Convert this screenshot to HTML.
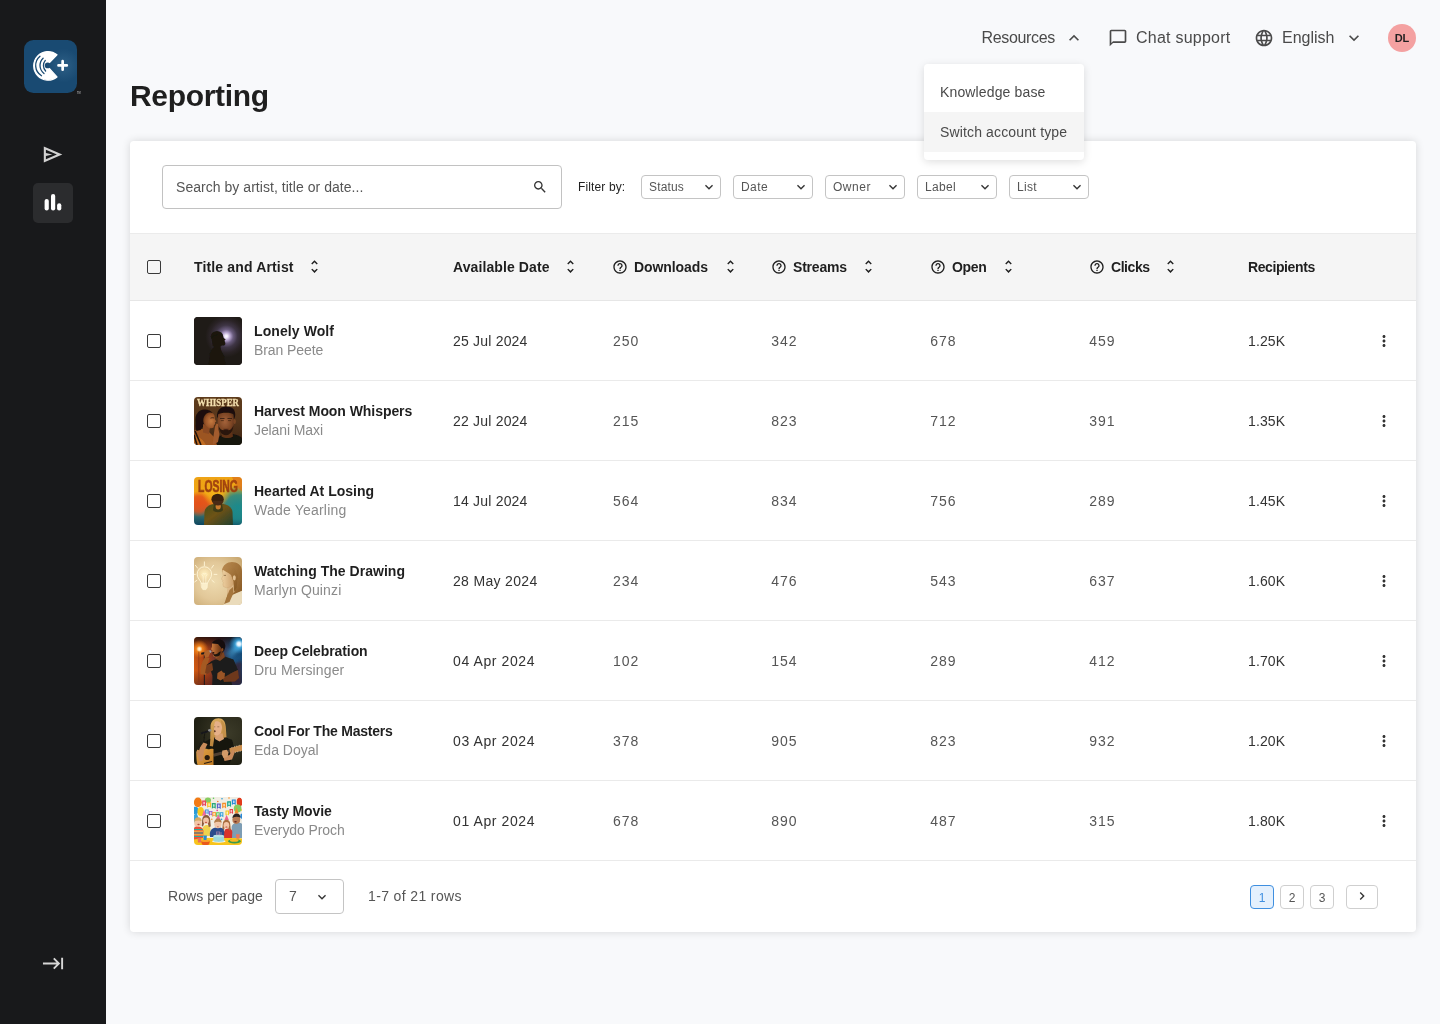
<!DOCTYPE html>
<html lang="en">
<head>
<meta charset="utf-8">
<title>Reporting</title>
<style>
*{box-sizing:border-box}
html,body{margin:0;padding:0}
html{background:#f8f9fb}
body{width:1440px;height:1024px;overflow:hidden;font-family:"Liberation Sans",sans-serif;color:#1f1f1f;position:relative;-webkit-font-smoothing:antialiased}
#app{position:absolute;left:0;top:0;width:1440px;height:1024px;will-change:transform}
svg{display:block}
.abs{position:absolute}
.t{position:absolute;white-space:nowrap}
/* sidebar */
.sidebar{position:absolute;left:0;top:0;width:106px;height:1024px;background:#18191b}
.logo{position:absolute;left:24px;top:40px;width:58px;height:56px}
.nav-item{position:absolute;left:33px;width:40px;height:40px;border-radius:5px}
.nav-item.active{background:#2b2c2e}
/* topbar */
.topbar{position:absolute;left:106px;top:0;width:1334px;height:76px}
.topbar .t{font-size:16px;line-height:20px;color:#4a4a4a;top:27.5px}
.topbar svg{position:absolute;top:28px;width:20px;height:20px;fill:#4a4a4a}
.avatar{position:absolute;left:1282px;top:24px;width:28px;height:28px;border-radius:50%;background:#f4a1a1;color:#1f1f1f;font-weight:700;font-size:11px;line-height:28px;text-align:center}
.menu{position:absolute;left:924px;top:64px;width:160px;height:96px;background:#fff;border-radius:4px;box-shadow:0 2px 8px rgba(0,0,0,.13);padding:8px 0;z-index:5}
.menu-item{position:relative;height:40px;font-size:14px;line-height:40px;color:#4a4a4a;padding-left:16px;white-space:nowrap}
.menu-item.hover{background:#f5f5f5}
h1{position:absolute;left:130px;top:76px;margin:0;font-size:30px;line-height:40px;font-weight:700;color:#1f1f1f;white-space:nowrap}
/* card */
.card{position:absolute;left:130px;top:141px;width:1286px;height:791px;background:#fff;border-radius:4px;box-shadow:0 0 8px rgba(0,0,0,.14)}
.toolbar{position:relative;height:92px}
.search{position:absolute;left:32px;top:24px;width:400px;height:44px;border:1px solid #c2c2c2;border-radius:4px;background:#fff}
.search .t{left:13px;top:11px;font-size:14px;line-height:20px;color:#555}
.search svg{position:absolute;left:369px;top:13px;width:16px;height:16px;fill:#333}
.filter-label{left:448px;top:38px;font-size:12px;line-height:16px;color:#1f1f1f}
.select{position:absolute;top:34px;width:80px;height:24px;border:1px solid #c4c4c4;border-radius:4px;background:#fff}
.select .t{left:7px;top:3px;font-size:12px;line-height:16px;color:#555}
.select svg{position:absolute;left:59px;top:3px;width:16px;height:16px;fill:#333}
table{border-collapse:separate;border-spacing:0;table-layout:fixed;width:1286px}
th,td{padding:0;text-align:left;vertical-align:middle;position:relative}
thead th{height:68px;background:#f5f5f5;border-top:1px solid #ebebeb;border-bottom:1px solid #e6e6e6;font-size:14px;font-weight:700;color:#1f1f1f}
tbody td{height:80px;border-bottom:1px solid #eaeaea;font-size:14px;color:#555}
.cb{display:block;width:14px;height:14px;margin-left:17px;border:1px solid #3a3a3a;border-radius:2px;background:transparent}
.th-in{position:relative;height:20px}
.th-in .t{top:-.5px;line-height:20px}
.th-in svg{position:absolute;fill:#1f1f1f}
.th-in svg.help{left:-1px;top:2px;width:16px;height:16px}
.th-in svg.sort{top:1px;width:17px;height:17px}
.song{position:relative;height:48px}
.thumb{position:absolute;left:0;top:0;width:48px;height:48px;border-radius:4px;overflow:hidden}
.song .title{left:60px;top:4px;font-weight:700;color:#1f1f1f;line-height:20px}
.song .artist{left:60px;top:23px;color:#8a8a8a;line-height:20px}
.cell{position:relative;height:20px}
.cell .t{top:0;left:0;line-height:20px}
.dark{color:#333}
.kebab{position:absolute;left:15px;top:-9px;width:18px;height:18px;fill:#333}
/* footer */
.footer{position:relative;height:71px}
.footer .t{font-size:14px;line-height:20px;color:#555;top:25px}
.rpp{position:absolute;left:145px;top:18px;width:69px;height:35px;border:1px solid #c4c4c4;border-radius:4px}
.rpp .t{left:13px;top:6px}
.rpp svg{position:absolute;left:38px;top:9px;width:16px;height:16px;fill:#333}
.pg{position:absolute;top:23.5px;width:24px;height:24px;border:1px solid #cfcfcf;border-radius:4px;font-size:12px;line-height:22px;padding-top:1px;text-align:center;color:#555;background:#fff}
.pg.on{border-color:#3f8fe0;background:#e4f0fd;color:#3f8fe0}
.pg svg{width:16px;height:16px;fill:#333;margin:1.5px auto 0}
</style>
</head>
<body>
<div id="app">
<aside class="sidebar">
  <svg class="logo" viewBox="0 0 58 56" aria-label="logo">
    <defs>
      <radialGradient id="lg" cx="39.5" cy="25.5" r="17" gradientUnits="userSpaceOnUse">
        <stop offset="0" stop-color="#2d5f86"/><stop offset="1" stop-color="#194a72"/>
      </radialGradient>
    </defs>
    <rect x="0" y="0" width="53" height="53" rx="9.5" fill="url(#lg)"/>
    <path d="M33 14.750A14.300 14.300 0 1 0 33 36.950L22.600 25.500Z" fill="#fff" stroke="#fff" stroke-width="1.200" stroke-linejoin="round"/>
    <circle cx="23.700" cy="25.450" r="2.900" fill="url(#lg)"/>
    <g fill="none" stroke="#194a72" stroke-width="1.300" stroke-linecap="round">
      <path d="M16 16.300A11.900 11.900 0 0 0 17.500 35.700"/>
      <path d="M19.100 18.200A10.100 10.100 0 0 0 20 33.500"/>
      <path d="M21.300 20.400A8 8 0 0 0 21.600 31"/>
    </g>
    <path d="M34.500 25.400H42.800M38.650 21.200V29.700" stroke="#fff" stroke-width="2.700" stroke-linecap="round" fill="none"/>
    <text x="53" y="54" font-size="2.600" font-family="Liberation Sans, sans-serif" font-weight="700" fill="#9a9a9c">TM</text>
  </svg>
  <nav>
    <a class="nav-item" style="top:134px">
      <svg class="abs" style="left:7px;top:8px" width="26" height="24" viewBox="40 142 26 24" fill="#d2d2d2"><path fill-rule="evenodd" d="M43.800 146.500L62.300 154.450L43.800 162.400ZM45.900 149.700L45.900 153.100L52.300 154.450L45.900 155.900L45.900 159.200L56.900 154.450Z"/></svg>
    </a>
    <a class="nav-item active" style="top:182.5px">
      <svg class="abs" style="left:0;top:-.5px" width="40" height="40" viewBox="0 0 40 40" fill="#fff"><rect x="11.6" y="17" width="4.2" height="11.6" rx="2.1"/><rect x="18" y="12" width="4.2" height="16.6" rx="2.1"/><rect x="24.1" y="21.2" width="4.2" height="7.4" rx="2.1"/></svg>
    </a>
  </nav>
  <a class="abs" style="left:41.5px;top:952px">
    <svg width="23" height="23" viewBox="0 0 24 24" fill="#d6d6d6"><path d="M11.59 7.41L15.17 11H1v2h14.17l-3.59 3.59L13 18l6-6-6-6-1.41 1.41zM20 6v12h2V6h-2z"/></svg>
  </a>
</aside>

<header class="topbar">
  <span class="t" style="letter-spacing:-0.34px;left:875.5px">Resources</span>
  <svg style="left:958px" viewBox="0 0 24 24"><path d="M12 8l-6 6 1.41 1.41L12 10.83l4.59 4.58L18 14z"/></svg>
  <svg style="left:1002px" viewBox="0 0 24 24"><path d="M20 2H4c-1.1 0-2 .9-2 2v18l4-4h14c1.1 0 2-.9 2-2V4c0-1.1-.9-2-2-2zm0 14H6l-2 2V4h16v12z"/></svg>
  <span class="t" style="letter-spacing:0.24px;left:1030px">Chat support</span>
  <svg style="left:1148px" viewBox="0 0 24 24"><path d="M11.99 2C6.47 2 2 6.48 2 12s4.47 10 9.99 10C17.52 22 22 17.52 22 12S17.52 2 11.99 2zm6.93 6h-2.95c-.32-1.25-.78-2.45-1.38-3.56 1.84.63 3.37 1.91 4.33 3.56zM12 4.04c.83 1.2 1.48 2.53 1.91 3.96h-3.82c.43-1.43 1.08-2.76 1.91-3.960zM4.26 14C4.1 13.36 4 12.69 4 12s.1-1.36.26-2h3.380c-.08.66-.14 1.32-.14 2 0 .68.06 1.34.14 2H4.260zm.82 2h2.95c.32 1.25.78 2.45 1.38 3.56-1.84-.63-3.37-1.9-4.33-3.560zm2.950-8H5.080c.96-1.66 2.49-2.93 4.33-3.56C8.810 5.550 8.350 6.750 8.030 8zM12 19.960c-.83-1.2-1.48-2.53-1.91-3.96h3.820c-.43 1.430-1.080 2.760-1.910 3.960zM14.340 14H9.660c-.09-.66-.16-1.32-.16-2 0-.68.07-1.350.16-2h4.680c.09.65.16 1.320.16 2 0 .68-.07 1.340-.16 2zm.25 5.560c.6-1.110 1.060-2.310 1.380-3.560h2.950c-.96 1.650-2.490 2.930-4.330 3.560zM16.360 14c.08-.66.14-1.320.14-2 0-.68-.06-1.340-.14-2h3.380c.16.64.26 1.310.26 2s-.1 1.360-.26 2h-3.380z"/></svg>
  <span class="t" style="letter-spacing:-0.01px;left:1176px">English</span>
  <svg style="left:1238px" viewBox="0 0 24 24"><path d="M16.59 8.59L12 13.17 7.41 8.59 6 10l6 6 6-6z"/></svg>
  <div class="avatar">DL</div>
</header>
<div class="menu" role="menu">
  <div class="menu-item"><span style="letter-spacing:0.14px">Knowledge base</span></div>
  <div class="menu-item hover"><span style="letter-spacing:0.14px">Switch account type</span></div>
</div>

<h1><span style="letter-spacing:-0.33px">Reporting</span></h1>
<main class="card">
 <div class="toolbar">
  <div class="search"><span class="t" style="letter-spacing:0.04px">Search by artist, title or date...</span><svg viewBox="0 0 24 24"><path d="M15.5 14h-.79l-.28-.27C15.410 12.590 16 11.110 16 9.500 16 5.910 13.090 3 9.500 3S3 5.910 3 9.500 5.910 16 9.500 16c1.610 0 3.090-.59 4.230-1.570l.27.28v.79l5 4.990L20.490 19l-4.990-5zm-6 0C7.010 14 5 11.990 5 9.500S7.010 5 9.500 5 14 7.010 14 9.500 11.990 14 9.500 14z"/></svg></div>
  <span class="t filter-label" style="letter-spacing:0.13px">Filter by:</span>
  <div class="select" style="left:511px"><span class="t" style="letter-spacing:0.15px">Status</span><svg viewBox="0 0 24 24"><path d="M16.59 8.59L12 13.17 7.41 8.590 6 10l6 6 6-6z"/></svg></div>
  <div class="select" style="left:603px"><span class="t" style="letter-spacing:0.45px">Date</span><svg viewBox="0 0 24 24"><path d="M16.59 8.59L12 13.17 7.41 8.590 6 10l6 6 6-6z"/></svg></div>
  <div class="select" style="left:695px"><span class="t" style="letter-spacing:0.54px">Owner</span><svg viewBox="0 0 24 24"><path d="M16.59 8.59L12 13.17 7.41 8.590 6 10l6 6 6-6z"/></svg></div>
  <div class="select" style="left:787px"><span class="t" style="letter-spacing:0.33px">Label</span><svg viewBox="0 0 24 24"><path d="M16.59 8.59L12 13.17 7.41 8.590 6 10l6 6 6-6z"/></svg></div>
  <div class="select" style="left:879px"><span class="t" style="letter-spacing:0.3px">List</span><svg viewBox="0 0 24 24"><path d="M16.59 8.59L12 13.17 7.41 8.590 6 10l6 6 6-6z"/></svg></div>
 </div>
 <table>
  <colgroup><col style="width:64px"><col style="width:259px"><col style="width:160px"><col style="width:159px"><col style="width:159px"><col style="width:159px"><col style="width:158px"><col style="width:112px"><col style="width:56px"></colgroup>
  <thead><tr>
   <th><span class="cb"></span></th>
   <th><div class="th-in"><span class="t" style="letter-spacing:0.15px;left:0px">Title and Artist</span><svg class="sort" style="left:111.5px" viewBox="0 0 24 24"><path d="M12 5.83L15.17 9l1.41-1.41L12 3 7.41 7.59 8.83 9 12 5.830zm0 12.340L8.830 15l-1.410 1.410L12 21l4.590-4.590L15.170 15 12 18.170z"/></svg></div></th>
   <th><div class="th-in"><span class="t" style="letter-spacing:0.1px;left:0px">Available Date</span><svg class="sort" style="left:108.5px" viewBox="0 0 24 24"><path d="M12 5.83L15.17 9l1.41-1.41L12 3 7.41 7.59 8.83 9 12 5.830zm0 12.340L8.830 15l-1.410 1.410L12 21l4.590-4.590L15.170 15 12 18.170z"/></svg></div></th>
   <th><div class="th-in"><svg class="help" viewBox="0 0 24 24"><path d="M11 18h2v-2h-2v2zm1-16C6.480 2 2 6.480 2 12s4.480 10 10 10 10-4.480 10-10S17.520 2 12 2zm0 18c-4.410 0-8-3.590-8-8s3.590-8 8-8 8 3.590 8 8-3.590 8-8 8zm0-14c-2.210 0-4 1.790-4 4h2c0-1.100.9-2 2-2s2 .9 2 2c0 2-3 1.750-3 5h2c0-2.250 3-2.500 3-5 0-2.210-1.790-4-4-4z"/></svg><span class="t" style="letter-spacing:-0.08px;left:21px">Downloads</span><svg class="sort" style="left:108.5px" viewBox="0 0 24 24"><path d="M12 5.83L15.17 9l1.41-1.41L12 3 7.41 7.59 8.83 9 12 5.830zm0 12.340L8.830 15l-1.410 1.410L12 21l4.590-4.590L15.170 15 12 18.170z"/></svg></div></th>
   <th><div class="th-in"><svg class="help" viewBox="0 0 24 24"><path d="M11 18h2v-2h-2v2zm1-16C6.480 2 2 6.480 2 12s4.480 10 10 10 10-4.480 10-10S17.520 2 12 2zm0 18c-4.410 0-8-3.590-8-8s3.590-8 8-8 8 3.590 8 8-3.590 8-8 8zm0-14c-2.210 0-4 1.790-4 4h2c0-1.100.9-2 2-2s2 .9 2 2c0 2-3 1.750-3 5h2c0-2.250 3-2.500 3-5 0-2.210-1.790-4-4-4z"/></svg><span class="t" style="letter-spacing:-0.21px;left:21px">Streams</span><svg class="sort" style="left:87.5px" viewBox="0 0 24 24"><path d="M12 5.83L15.17 9l1.41-1.41L12 3 7.41 7.59 8.83 9 12 5.830zm0 12.340L8.830 15l-1.410 1.410L12 21l4.590-4.590L15.170 15 12 18.170z"/></svg></div></th>
   <th><div class="th-in"><svg class="help" viewBox="0 0 24 24"><path d="M11 18h2v-2h-2v2zm1-16C6.480 2 2 6.480 2 12s4.480 10 10 10 10-4.480 10-10S17.520 2 12 2zm0 18c-4.410 0-8-3.590-8-8s3.590-8 8-8 8 3.590 8 8-3.590 8-8 8zm0-14c-2.210 0-4 1.790-4 4h2c0-1.100.9-2 2-2s2 .9 2 2c0 2-3 1.750-3 5h2c0-2.250 3-2.500 3-5 0-2.210-1.790-4-4-4z"/></svg><span class="t" style="letter-spacing:-0.34px;left:21px">Open</span><svg class="sort" style="left:69px" viewBox="0 0 24 24"><path d="M12 5.83L15.17 9l1.41-1.41L12 3 7.41 7.59 8.83 9 12 5.830zm0 12.340L8.830 15l-1.410 1.410L12 21l4.590-4.590L15.170 15 12 18.170z"/></svg></div></th>
   <th><div class="th-in"><svg class="help" viewBox="0 0 24 24"><path d="M11 18h2v-2h-2v2zm1-16C6.480 2 2 6.480 2 12s4.480 10 10 10 10-4.480 10-10S17.520 2 12 2zm0 18c-4.410 0-8-3.590-8-8s3.590-8 8-8 8 3.590 8 8-3.590 8-8 8zm0-14c-2.210 0-4 1.790-4 4h2c0-1.100.9-2 2-2s2 .9 2 2c0 2-3 1.750-3 5h2c0-2.250 3-2.500 3-5 0-2.210-1.790-4-4-4z"/></svg><span class="t" style="letter-spacing:-0.45px;left:21px">Clicks</span><svg class="sort" style="left:72px" viewBox="0 0 24 24"><path d="M12 5.83L15.17 9l1.41-1.41L12 3 7.41 7.59 8.83 9 12 5.830zm0 12.340L8.830 15l-1.410 1.410L12 21l4.590-4.590L15.170 15 12 18.170z"/></svg></div></th>
   <th><div class="th-in"><span class="t" style="letter-spacing:-0.4px;left:0px">Recipients</span></div></th>
   <th></th>
  </tr></thead>
  <tbody>
   <tr>
    <td><span class="cb"></span></td>
    <td><div class="song"><div class="thumb"><svg width="48" height="48" viewBox="0 0 48 48">
<defs>
<radialGradient id="t1g" cx="32.300" cy="19.300" r="21" gradientUnits="userSpaceOnUse">
<stop offset="0" stop-color="#ffffff"/><stop offset=".07" stop-color="#f1e9fb"/><stop offset=".19" stop-color="#b3a2cc"/><stop offset=".33" stop-color="#6b5d7f"/><stop offset=".53" stop-color="#3e3545"/><stop offset=".78" stop-color="#2a2326"/><stop offset="1" stop-color="#1f1b17"/>
</radialGradient>
<filter id="t1b" x="-20%" y="-20%" width="140%" height="140%"><feGaussianBlur stdDeviation=".5"/></filter>
</defs>
<rect width="48" height="48" fill="#1f1b17"/>
<rect width="48" height="48" fill="url(#t1g)"/>
<g fill="#1a1511" filter="url(#t1b)">
<ellipse cx="23" cy="19.400" rx="6.200" ry="5.500"/>
<path d="M17.500 21c2-3 8.500-4.500 11-2.500l1.500 2.800 1.700 1.200-1.200 1 .8 2.500c.3 2-1.200 3-3.300 2.600l-1.500.900.500 3.500 3 5.500 2 11.500H14.500l1-12c.5-3.500 2-6 4.500-8l-1.500-1.500z"/>
</g>
</svg></div><span class="t title" style="letter-spacing:0.09px">Lonely Wolf</span><span class="t artist" style="letter-spacing:-0.08px">Bran Peete</span></div></td>
    <td><div class="cell"><span class="t dark" style="letter-spacing:0.2px">25 Jul 2024</span></div></td>
    <td><div class="cell"><span class="t" style="letter-spacing:0.97px">250</span></div></td>
    <td><div class="cell"><span class="t" style="letter-spacing:0.97px;left:-.7px">342</span></div></td>
    <td><div class="cell"><span class="t" style="letter-spacing:0.97px;left:-.7px">678</span></div></td>
    <td><div class="cell"><span class="t" style="letter-spacing:0.97px;left:-.7px">459</span></div></td>
    <td><div class="cell"><span class="t dark" style="letter-spacing:0.1px">1.25K</span></div></td>
    <td><div class="cell" style="height:0"><svg class="kebab" viewBox="0 0 24 24"><path d="M12 8c1.100 0 2-.9 2-2s-.9-2-2-2-2 .9-2 2 .9 2 2 2zm0 2c-1.100 0-2 .9-2 2s.9 2 2 2 2-.9 2-2-.9-2-2-2zm0 6c-1.100 0-2 .9-2 2s.9 2 2 2 2-.9 2-2-.9-2-2-2z"/></svg></div></td>
   </tr>
   <tr>
    <td><span class="cb"></span></td>
    <td><div class="song"><div class="thumb"><svg width="48" height="48" viewBox="0 0 48 48">
<defs>
<linearGradient id="t2g" x1="0" y1="0" x2="0" y2="1"><stop offset="0" stop-color="#5e3c1c"/><stop offset=".5" stop-color="#55351b"/><stop offset="1" stop-color="#3d2412"/></linearGradient>
<radialGradient id="t2f" cx=".45" cy=".4" r=".7"><stop offset="0" stop-color="#a4633a"/><stop offset=".6" stop-color="#7a4424"/><stop offset="1" stop-color="#4a2813"/></radialGradient>
<radialGradient id="t2w" cx=".6" cy=".55" r=".7"><stop offset="0" stop-color="#c57a40"/><stop offset=".6" stop-color="#9a5529"/><stop offset="1" stop-color="#5a2f14"/></radialGradient>
<filter id="t2b" x="-10%" y="-10%" width="120%" height="120%"><feGaussianBlur stdDeviation=".55"/></filter>
</defs>
<rect width="48" height="48" fill="url(#t2g)"/>
<g filter="url(#t2b)">
<!-- man shirt -->
<path d="M22 48c0-6 3-9.500 8-10.500l4 1.500 5-2c5 1 9 3 9 5v6z" fill="#17120e"/>
<!-- man neck -->
<path d="M28 34h10l1 5.500c-3 2-8 2-11.500 0z" fill="#5e3319"/>
<!-- man hair -->
<path d="M23 20c-.5-6 3-10.500 9.500-10.500S42 13.500 41 20l-1 2-16-1z" fill="#1a100a"/>
<!-- man face -->
<path d="M24 17.500c2-2 13.500-2.500 15.500 0l.5 8c0 7-3.500 12.500-8 12.500s-8.500-5-8.500-12.500z" fill="url(#t2f)"/>
<!-- ear -->
<ellipse cx="40.600" cy="24.500" rx="1.300" ry="2.500" fill="#7a4424"/>
<!-- beard -->
<path d="M24.500 29c1.500 3 3 4.300 5 4.300 1-1.500 4-1.500 5 0 2 0 3.500-1.800 5-5-.3 5.700-3.500 10-7.500 10s-7-4-7.500-9.300z" fill="#2a170c"/>
<!-- brows / eyes -->
<path d="M26 21.500h4.500M33.500 21.500H38" stroke="#3a2010" stroke-width=".9"/>
<path d="M26.800 23.600h3M34 23.600h3" stroke="#40240f" stroke-width=".7"/>
<path d="M29.500 32.300h5" stroke="#4a2614" stroke-width=".9"/>
<!-- woman shoulders -->
<path d="M0 34c3-2 8-2.500 11-1.500l4 2.500 5 5 3 8H0z" fill="#9c5420"/><path d="M0 40c4-1 8 1 12 8H0z" fill="#c06c22"/>
<path d="M1 34l6 14M0 38l3 10" stroke="#22140c" stroke-width="1.600"/>
<!-- woman hair -->
<path d="M1.500 25c-1-7 3-12.500 9-12.500 4 0 6.500 1.500 8 3.500l-6 4-2 8-4 5-4 1c-1-2-1-6-1-9z" fill="#1a0f09"/>
<!-- woman neck -->
<path d="M9 27l7 3-1 7-6-1.500z" fill="#8a4a22"/>
<!-- woman face -->
<path d="M11.500 17.500c3-3 8-2.500 9 1l.3 3.500 1.500 2.500-1.300.8.200 2-1.200.7-.3 2.500c-2 1.500-6 1-9-2-2-3.500-2-8 .8-11z" fill="url(#t2w)"/>
<path d="M16.500 21.200c1.200-.6 2.500-.6 3.500-.2" stroke="#2a160b" stroke-width=".8" fill="none"/>
<!-- hand -->
<path d="M21 29.500l1.500-3 1.500.5.300 5 1.200 5-1.500 8-5.500 3 1-9z" fill="#a25c2d"/>
</g>
<text x="24" y="9.300" text-anchor="middle" font-family="Liberation Serif, DejaVu Serif, serif" font-weight="700" font-size="9.800" fill="#f3dfae" stroke="#f3dfae" stroke-width=".3" textLength="42" lengthAdjust="spacingAndGlyphs">WHISPER</text>
</svg></div><span class="t title" style="letter-spacing:-0.06px">Harvest Moon Whispers</span><span class="t artist" style="letter-spacing:-0.1px">Jelani Maxi</span></div></td>
    <td><div class="cell"><span class="t dark" style="letter-spacing:0.2px">22 Jul 2024</span></div></td>
    <td><div class="cell"><span class="t" style="letter-spacing:0.97px">215</span></div></td>
    <td><div class="cell"><span class="t" style="letter-spacing:0.97px;left:-.7px">823</span></div></td>
    <td><div class="cell"><span class="t" style="letter-spacing:0.97px;left:-.7px">712</span></div></td>
    <td><div class="cell"><span class="t" style="letter-spacing:0.97px;left:-.7px">391</span></div></td>
    <td><div class="cell"><span class="t dark" style="letter-spacing:0.1px">1.35K</span></div></td>
    <td><div class="cell" style="height:0"><svg class="kebab" viewBox="0 0 24 24"><path d="M12 8c1.100 0 2-.9 2-2s-.9-2-2-2-2 .9-2 2 .9 2 2 2zm0 2c-1.100 0-2 .9-2 2s.9 2 2 2 2-.9 2-2-.9-2-2-2zm0 6c-1.100 0-2 .9-2 2s.9 2 2 2 2-.9 2-2-.9-2-2-2z"/></svg></div></td>
   </tr>
   <tr>
    <td><span class="cb"></span></td>
    <td><div class="song"><div class="thumb"><svg width="48" height="48" viewBox="0 0 48 48">
<defs>
<linearGradient id="t3g" x1="0" y1="0" x2="0" y2="1"><stop offset="0" stop-color="#eea315"/><stop offset=".35" stop-color="#f0a514"/><stop offset=".55" stop-color="#e2701a"/><stop offset=".72" stop-color="#3f7a70"/><stop offset="1" stop-color="#0d4660"/></linearGradient>
<radialGradient id="t3r" cx="44" cy="30" r="22" gradientUnits="userSpaceOnUse"><stop offset="0" stop-color="#1b8a8c"/><stop offset=".55" stop-color="#1b8a8c" stop-opacity=".85"/><stop offset="1" stop-color="#1b8a8c" stop-opacity="0"/></radialGradient>
<radialGradient id="t3o" cx="5" cy="27" r="13" gradientUnits="userSpaceOnUse"><stop offset="0" stop-color="#e4501a"/><stop offset=".6" stop-color="#e4501a" stop-opacity=".8"/><stop offset="1" stop-color="#e4501a" stop-opacity="0"/></radialGradient>
<radialGradient id="t3y" cx="22" cy="16" r="14" gradientUnits="userSpaceOnUse"><stop offset="0" stop-color="#f6b61a"/><stop offset="1" stop-color="#f6b61a" stop-opacity="0"/></radialGradient>
<linearGradient id="t3s" x1="0" y1="0" x2="1" y2="1"><stop offset="0" stop-color="#46501c"/><stop offset=".45" stop-color="#6e5216"/><stop offset="1" stop-color="#21402f"/></linearGradient>
<linearGradient id="t3t" x1="0" y1="0" x2="0" y2="1"><stop offset="0" stop-color="#b04a10"/><stop offset="1" stop-color="#8d3c10"/></linearGradient>
<filter id="t3b" x="-10%" y="-10%" width="120%" height="120%"><feGaussianBlur stdDeviation=".6"/></filter>
</defs>
<rect width="48" height="48" fill="url(#t3g)"/>
<rect width="48" height="48" fill="url(#t3r)"/>
<rect width="48" height="48" fill="url(#t3o)"/>
<rect width="48" height="48" fill="url(#t3y)"/>
<path d="M38 0h10v14c-3-1-6-5-10-14z" fill="#dc6f1c" opacity=".7" filter="url(#t3b)"/>
<g filter="url(#t3b)">
<path d="M10 48l.5-13c.5-4 3-6.500 7-7.500l4-1h6l4 1c4 1 6.500 3.500 7 7.500l.5 13z" fill="url(#t3s)"/>
<path d="M20 27h8l1 6c-1.500 3-8.500 3-10 0z" fill="#3d3a16"/>
<ellipse cx="24.200" cy="29.500" rx="2.600" ry="3" fill="#c87a2e"/>
<ellipse cx="23.600" cy="22.300" rx="6.200" ry="5.600" fill="#3a2410"/>
<path d="M18 24c1 3 3.500 4.500 6 4.500s4.500-1.500 5.500-4.500z" fill="#4a2c12"/>
</g>
<text x="24" y="15.100" text-anchor="middle" font-family="Liberation Sans, sans-serif" font-weight="700" font-size="16.400" fill="url(#t3t)" stroke="#a2440f" stroke-width=".7" textLength="39.800" lengthAdjust="spacingAndGlyphs">LOSING</text>
</svg></div><span class="t title">Hearted At Losing</span><span class="t artist" style="letter-spacing:0.21px">Wade Yearling</span></div></td>
    <td><div class="cell"><span class="t dark" style="letter-spacing:0.2px">14 Jul 2024</span></div></td>
    <td><div class="cell"><span class="t" style="letter-spacing:0.97px">564</span></div></td>
    <td><div class="cell"><span class="t" style="letter-spacing:0.97px;left:-.7px">834</span></div></td>
    <td><div class="cell"><span class="t" style="letter-spacing:0.97px;left:-.7px">756</span></div></td>
    <td><div class="cell"><span class="t" style="letter-spacing:0.97px;left:-.7px">289</span></div></td>
    <td><div class="cell"><span class="t dark" style="letter-spacing:0.1px">1.45K</span></div></td>
    <td><div class="cell" style="height:0"><svg class="kebab" viewBox="0 0 24 24"><path d="M12 8c1.100 0 2-.9 2-2s-.9-2-2-2-2 .9-2 2 .9 2 2 2zm0 2c-1.100 0-2 .9-2 2s.9 2 2 2 2-.9 2-2-.9-2-2-2zm0 6c-1.100 0-2 .9-2 2s.9 2 2 2 2-.9 2-2-.9-2-2-2z"/></svg></div></td>
   </tr>
   <tr>
    <td><span class="cb"></span></td>
    <td><div class="song"><div class="thumb"><svg width="48" height="48" viewBox="0 0 48 48">
<defs>
<radialGradient id="t4g" cx="20" cy="24" r="34" gradientUnits="userSpaceOnUse"><stop offset="0" stop-color="#eedbb0"/><stop offset=".55" stop-color="#e2c899"/><stop offset="1" stop-color="#c9a871"/></radialGradient>
<radialGradient id="t4l" cx="10.400" cy="17" r="9" gradientUnits="userSpaceOnUse"><stop offset="0" stop-color="#fff2c4"/><stop offset=".5" stop-color="#f8e2b0" stop-opacity=".8"/><stop offset="1" stop-color="#f0d8a8" stop-opacity="0"/></radialGradient>
<linearGradient id="t4h" x1="0" y1="0" x2="1" y2="1"><stop offset="0" stop-color="#b98a50"/><stop offset=".6" stop-color="#9b6c34"/><stop offset="1" stop-color="#80521f"/></linearGradient>
<linearGradient id="t4f" x1="0" y1="0" x2="1" y2="0"><stop offset="0" stop-color="#efd2a4"/><stop offset="1" stop-color="#c99b66"/></linearGradient>
<filter id="t4b" x="-10%" y="-10%" width="120%" height="120%"><feGaussianBlur stdDeviation=".5"/></filter>
<filter id="t4c" x="-10%" y="-10%" width="120%" height="120%"><feGaussianBlur stdDeviation=".25"/></filter>
</defs>
<rect width="48" height="48" fill="url(#t4g)"/>
<rect width="48" height="48" fill="url(#t4l)"/>
<g filter="url(#t4c)" fill="none" stroke="#fff6d8" stroke-width=".9" stroke-linecap="round">
<path d="M7.300 26c-1-3.200-4.100-4.600-4.100-9a7.200 7.200 0 0 1 14.400 0c0 4.400-3.100 5.800-4.100 9z"/>
<path d="M7.300 26.200h6.200l-.3 4.300-1.300 2.100H8.900l-1.300-2.100z" fill="#fbeecb" stroke-width=".6"/>
<path d="M9.200 26v-6.500l-1.200-2 1.400-1.400 1.100 1.200 1.100-1.200 1.400 1.400-1.200 2V26" stroke-width=".7"/>
<path d="M10.400 4.900v3.700M1.400 8.300l2.200 2.800M19.500 8.300l-1.900 2.800M20.100 17.400h2.800M.1 17.400h1.200M.7 24.900l2.200-1.600M17.900 23.300l2.200 1.900" stroke-width=".9"/>
</g>
<g filter="url(#t4b)">
<!-- back hair -->
<path d="M28 13c1-5 5-8 10-8 5 0 10 3 10 9v20l-6 3-3.500 2-2 6-5.500 1 2.500-8 1-8-2-6z" fill="url(#t4h)"/>
<!-- shirt -->
<path d="M29.500 48l1.500-4 7-6 10-4.300V48z" fill="#eadbbb"/>
<!-- neck -->
<path d="M33.500 27l6.500-1 .5 9-5 4-2.500-4z" fill="#dcb98a"/>
<!-- face -->
<path d="M28.300 13.500c2-2 6-2.500 9-1l3.500 6-.5 8-3.500 3.500-4.500.8-2.800-1.300-.6-2.500.6-1.200-.9-1.200.5-1.200-1.500-1 .3-1.500 1.300-2.400z" fill="url(#t4f)" stroke="#c9a06c" stroke-width=".35"/>
<!-- front hair over temple -->
<path d="M28.500 12.500c3-3.500 9-4 12.500-1.500l3 8-1.500 12-2.500 3.500-.5-10-2.500-6.500c-3-2.500-6-3.500-8.500-5.500z" fill="url(#t4h)"/>
<ellipse cx="40.300" cy="20.800" rx="1.500" ry="2.600" fill="#e3c193"/>
<path d="M29.800 18.400h2.200" stroke="#7a5a38" stroke-width=".7"/>
<!-- hair strand front -->
<path d="M35.500 33l3.500-3 .5 6-4 9-5.500 2z" fill="#a5763c"/>
</g>
</svg></div><span class="t title" style="letter-spacing:0.03px">Watching The Drawing</span><span class="t artist" style="letter-spacing:0.14px">Marlyn Quinzi</span></div></td>
    <td><div class="cell"><span class="t dark" style="letter-spacing:0.33px">28 May 2024</span></div></td>
    <td><div class="cell"><span class="t" style="letter-spacing:0.97px">234</span></div></td>
    <td><div class="cell"><span class="t" style="letter-spacing:0.97px;left:-.7px">476</span></div></td>
    <td><div class="cell"><span class="t" style="letter-spacing:0.97px;left:-.7px">543</span></div></td>
    <td><div class="cell"><span class="t" style="letter-spacing:0.97px;left:-.7px">637</span></div></td>
    <td><div class="cell"><span class="t dark" style="letter-spacing:0.1px">1.60K</span></div></td>
    <td><div class="cell" style="height:0"><svg class="kebab" viewBox="0 0 24 24"><path d="M12 8c1.100 0 2-.9 2-2s-.9-2-2-2-2 .9-2 2 .9 2 2 2zm0 2c-1.100 0-2 .9-2 2s.9 2 2 2 2-.9 2-2-.9-2-2-2zm0 6c-1.100 0-2 .9-2 2s.9 2 2 2 2-.9 2-2-.9-2-2-2z"/></svg></div></td>
   </tr>
   <tr>
    <td><span class="cb"></span></td>
    <td><div class="song"><div class="thumb"><svg width="48" height="48" viewBox="0 0 48 48">
<defs>
<linearGradient id="t5g" x1="0" y1="0" x2="1" y2="0"><stop offset="0" stop-color="#d25a12"/><stop offset=".3" stop-color="#a8401a"/><stop offset=".55" stop-color="#4a3040"/><stop offset=".78" stop-color="#1f5a8c"/><stop offset="1" stop-color="#15507f"/></linearGradient>
<linearGradient id="t5d" x1="0" y1="0" x2="0" y2="1"><stop offset="0" stop-color="#180b0a" stop-opacity=".85"/><stop offset=".25" stop-color="#180b0a" stop-opacity=".1"/><stop offset=".7" stop-color="#180b0a" stop-opacity="0"/><stop offset="1" stop-color="#2a1020" stop-opacity=".45"/></linearGradient>
<radialGradient id="t5l" cx="5.400" cy="12" r="9" gradientUnits="userSpaceOnUse"><stop offset="0" stop-color="#fff6e0"/><stop offset=".17" stop-color="#ffd9a0"/><stop offset=".35" stop-color="#f6881c" stop-opacity=".9"/><stop offset="1" stop-color="#ee7a14" stop-opacity="0"/></radialGradient>
<radialGradient id="t5r" cx="45" cy="7" r="10" gradientUnits="userSpaceOnUse"><stop offset="0" stop-color="#ffffff"/><stop offset=".18" stop-color="#d8f0ff"/><stop offset=".4" stop-color="#3aa4dc" stop-opacity=".9"/><stop offset="1" stop-color="#2a8ac8" stop-opacity="0"/></radialGradient>
<linearGradient id="t5m" x1="1" y1="0" x2="0" y2="1"><stop offset="0" stop-color="#8adcff" stop-opacity=".95"/><stop offset="1" stop-color="#2a90c8" stop-opacity="0"/></linearGradient>
<linearGradient id="t5s" x1="0" y1="0" x2="1" y2="0"><stop offset="0" stop-color="#d28040"/><stop offset=".6" stop-color="#8a4a20"/><stop offset="1" stop-color="#5a2c14"/></linearGradient>
<filter id="t5b" x="-10%" y="-10%" width="120%" height="120%"><feGaussianBlur stdDeviation=".55"/></filter>
<filter id="t5c" x="-20%" y="-20%" width="140%" height="140%"><feGaussianBlur stdDeviation="1.500"/></filter>
</defs>
<rect width="48" height="48" fill="url(#t5g)"/>
<rect width="48" height="48" fill="url(#t5d)"/><path d="M30 48V30l18-6v24z" fill="#3a1c2c" opacity=".75" filter="url(#t5c)"/>
<path d="M46.500 5.500l2 3.500-12 13-6-5z" fill="url(#t5m)" filter="url(#t5c)"/>
<rect width="48" height="48" fill="url(#t5l)"/>
<rect width="48" height="48" fill="url(#t5r)"/>
<g filter="url(#t5b)">
<!-- stand -->
<path d="M10.400 16.500V48" stroke="#2a1c1c" stroke-width="1.100"/>
<path d="M4.800 14.500V45" stroke="#7a3018" stroke-width=".6"/>
<!-- forearm to mic -->
<path d="M6.500 37c-.5-6 1-12 4.500-17l4.500 1-3 9-.5 8z" fill="#a55a22"/>
<!-- tshirt -->
<path d="M12.600 28l5-4 4.500-1.800 8-3 9.400 3.200 4.500 10.600-8.200 3.800 2.400 11.200H18.200l.3-9-1.500-4.500z" fill="#1c1c1a"/>
<!-- upper arm left -->
<path d="M12.600 28l5.500-2 1 7-5.500 4-2.600-1z" fill="#7a3e1c"/>
<!-- neck -->
<path d="M22.500 17l7-2 1.500 5-5 4-4.500-2z" fill="#7a4220"/>
<!-- hair -->
<path d="M18 6c2-3.500 7-4.500 10.500-2.500 3 2 3.500 6 2 9.500l-2.500 3-3.500-8-5.500-.500z" fill="#140e0c"/>
<!-- face -->
<path d="M18 6.500l6 .500 3 3.500 1.500 5-2 4.500-4 1-3.500-2 .3-2.500-1.300-1 .500-2-1.500-1.200 1-2.500z" fill="url(#t5s)"/>
<ellipse cx="28.300" cy="12.800" rx="1.100" ry="1.800" fill="#8a4a22"/>
<path d="M19 17.200c1 2.500 4 3 6.500 1.200l1.500-4-2 .500c-1 2-3.500 2.800-6 2.300z" fill="#1c1210"/>
<ellipse cx="19.300" cy="15.800" rx="1.200" ry=".9" fill="#2a1410"/>
<!-- mic + hand -->
<path d="M7 15.800l8.500-1.800.5 1.700-8.600 2z" fill="#1e1a1a"/>
<ellipse cx="16" cy="14.600" rx="1.500" ry="1.300" fill="#9a9aa0"/>
<path d="M10.500 14l4.500-1.200 1 3.500-1.500 3.700-3.500.5-1-3z" fill="#b0642c"/>
<!-- right arm + hand -->
<path d="M39.500 35l4.400-2 1.100 8-4 3.500-11 .5-1.500-4z" fill="#6e381a"/>
<path d="M23.500 36l4-2.500 1.500 2 2 .5-.5 5-4 2.500-3.500-2z" fill="#9a5426"/>
</g>
</svg></div><span class="t title" style="letter-spacing:-0.1px">Deep Celebration</span><span class="t artist" style="letter-spacing:0.13px">Dru Mersinger</span></div></td>
    <td><div class="cell"><span class="t dark" style="letter-spacing:0.6px">04 Apr 2024</span></div></td>
    <td><div class="cell"><span class="t" style="letter-spacing:0.97px">102</span></div></td>
    <td><div class="cell"><span class="t" style="letter-spacing:0.97px;left:-.7px">154</span></div></td>
    <td><div class="cell"><span class="t" style="letter-spacing:0.97px;left:-.7px">289</span></div></td>
    <td><div class="cell"><span class="t" style="letter-spacing:0.97px;left:-.7px">412</span></div></td>
    <td><div class="cell"><span class="t dark" style="letter-spacing:0.1px">1.70K</span></div></td>
    <td><div class="cell" style="height:0"><svg class="kebab" viewBox="0 0 24 24"><path d="M12 8c1.100 0 2-.9 2-2s-.9-2-2-2-2 .9-2 2 .9 2 2 2zm0 2c-1.100 0-2 .9-2 2s.9 2 2 2 2-.9 2-2-.9-2-2-2zm0 6c-1.100 0-2 .9-2 2s.9 2 2 2 2-.9 2-2-.9-2-2-2z"/></svg></div></td>
   </tr>
   <tr>
    <td><span class="cb"></span></td>
    <td><div class="song"><div class="thumb"><svg width="48" height="48" viewBox="0 0 48 48">
<defs>
<radialGradient id="t6g" cx="34" cy="16" r="34" gradientUnits="userSpaceOnUse"><stop offset="0" stop-color="#3b3a28"/><stop offset=".6" stop-color="#2d2c1d"/><stop offset="1" stop-color="#1f1f13"/></radialGradient>
<linearGradient id="t6h" x1="0" y1="0" x2="0" y2="1"><stop offset="0" stop-color="#d9aa5c"/><stop offset="1" stop-color="#b8823a"/></linearGradient>
<linearGradient id="t6u" x1="0" y1="0" x2="1" y2="1"><stop offset="0" stop-color="#e2a548"/><stop offset="1" stop-color="#c07a24"/></linearGradient>
<filter id="t6b" x="-10%" y="-10%" width="120%" height="120%"><feGaussianBlur stdDeviation=".5"/></filter>
</defs>
<rect width="48" height="48" fill="url(#t6g)"/>
<g filter="url(#t6b)">
<!-- mic stand -->
<path d="M10.700 16.500l-1.200 10.500" stroke="#15150f" stroke-width="1"/>
<!-- hair back -->
<path d="M16.500 10c0-5.500 3.500-8.700 8-8.700 4.500 0 6.800 3.200 7.200 8l.8 11-4 2-8-.5-1 7.500-3.500-.5.500-10z" fill="url(#t6h)"/>
<!-- tshirt -->
<path d="M9.500 25.500l9.400-5 13.100 0 6.200 2.500 1.900 7.500-.6 6.300-4.400 11.200H19.500l-3-12z" fill="#13130f"/>
<!-- neck -->
<path d="M21.500 16.500h7.500l1 5.500-4.500 2.500-4.500-2.500z" fill="#d9a172"/>
<!-- face -->
<path d="M18 8c.5-3 3.500-4.500 6.500-3.500 2.500 1 3.500 3.500 3.500 6.500l-1 5-3.500 2.500-3.500-.5-1.800-3.500z" fill="#e6b088"/>
<path d="M19.300 9.800h2M23.300 9.800h2" stroke="#7a5234" stroke-width=".6"/>
<ellipse cx="20.400" cy="14.300" rx="1.300" ry="1" fill="#4a241c"/>
<!-- hair front strands -->
<path d="M17 11c0-4 1.500-7 5-8.500-1.500 3-2 6-2 8.500l.5 8.500-1.500 10-3.200-.5.700-9z" fill="url(#t6h)"/>
<path d="M26.500 3c3 1 4.500 4 4.700 8l.6 9-2.800.5-.5-9c-.5-3-1-5.500-2-8.500z" fill="#c4904a"/>
<!-- mic -->
<path d="M6.400 15.600l9-2.800.6 1.800-9 3z" fill="#18181a"/>
<ellipse cx="15.700" cy="13.300" rx="1.700" ry="1.400" fill="#8e8e90"/>
<!-- guitar neck + head -->
<path d="M19 36.800l17-4.300.8 2.800-17 4.500z" fill="#4f4030"/>
<path d="M35.300 31.300l12.700-3.600v6l-11.500 2.800z" fill="#c98c4c"/>
<path d="M37.500 30.600l8.500-2.400M38.500 36l8.500-2" stroke="#efe6d6" stroke-width=".7" stroke-dasharray=".9 1.600"/>
<!-- guitar body -->
<path d="M2.300 36c0-3 2.500-5 6-5 2.500 0 4 1.200 6 1.200 2 0 3-1 5.200-.2v16H3.500c-1-3.500-1.200-8-1.200-12z" fill="url(#t6u)"/>
<circle cx="13.200" cy="40.500" r="2.600" fill="#2a1c10"/>
<path d="M10 46.500l8-2" stroke="#2a1c10" stroke-width="1.200"/>
<!-- right arm (viewer left) + strap -->
<path d="M9.500 25.500l4 1.500-3.500 7-1 9.500-3.500 1-3-9.500z" fill="#c98c5a"/>
<path d="M7.300 24.500L4.500 33" stroke="#1a1a14" stroke-width="1.300"/>
<!-- left arm + hand -->
<path d="M39.500 31l1 5-2.500 6.500-7.500 1.500-1-4 6-2z" fill="#c98a5a"/>
<path d="M28.300 33.500l4.500-.8 1.700 3-1 4.300-4 1-1.700-3.500z" fill="#d39a68"/>
</g>
</svg></div><span class="t title" style="letter-spacing:-0.23px">Cool For The Masters</span><span class="t artist" style="letter-spacing:0.01px">Eda Doyal</span></div></td>
    <td><div class="cell"><span class="t dark" style="letter-spacing:0.6px">03 Apr 2024</span></div></td>
    <td><div class="cell"><span class="t" style="letter-spacing:0.97px">378</span></div></td>
    <td><div class="cell"><span class="t" style="letter-spacing:0.97px;left:-.7px">905</span></div></td>
    <td><div class="cell"><span class="t" style="letter-spacing:0.97px;left:-.7px">823</span></div></td>
    <td><div class="cell"><span class="t" style="letter-spacing:0.97px;left:-.7px">932</span></div></td>
    <td><div class="cell"><span class="t dark" style="letter-spacing:0.1px">1.20K</span></div></td>
    <td><div class="cell" style="height:0"><svg class="kebab" viewBox="0 0 24 24"><path d="M12 8c1.100 0 2-.9 2-2s-.9-2-2-2-2 .9-2 2 .9 2 2 2zm0 2c-1.100 0-2 .9-2 2s.9 2 2 2 2-.9 2-2-.9-2-2-2zm0 6c-1.100 0-2 .9-2 2s.9 2 2 2 2-.9 2-2-.9-2-2-2z"/></svg></div></td>
   </tr>
   <tr>
    <td><span class="cb"></span></td>
    <td><div class="song"><div class="thumb"><svg width="48" height="48" viewBox="0 0 48 48">
<defs><filter id="t7b" x="-10%" y="-10%" width="120%" height="120%"><feGaussianBlur stdDeviation=".45"/></filter><filter id="t7c" x="-10%" y="-10%" width="120%" height="120%"><feGaussianBlur stdDeviation=".3"/></filter></defs>
<rect width="48" height="48" fill="#f1eee4"/>
<g filter="url(#t7b)">
<circle cx="19.5" cy="1.2" r=".8" fill="#5ac85a"/>
<circle cx="28" cy="1.8" r=".8" fill="#2a9ad8"/>
<circle cx="35" cy="1" r=".8" fill="#f8902a"/>
<circle cx="23.8" cy="4.5" r=".8" fill="#f87a2a"/>
<circle cx="23.2" cy="13.4" r=".8" fill="#e8409a"/>
<circle cx="17.8" cy="22.2" r=".8" fill="#f8902a"/>
<circle cx="27.5" cy="22.4" r=".8" fill="#2a9ad8"/>
<circle cx="47.5" cy="13" r=".8" fill="#f8c81c"/>
<ellipse cx="3.9" cy="5.4" rx="4" ry="4.8" fill="#f27a12"/>
<ellipse cx="13.9" cy="3.2" rx="3.1" ry="2.8" fill="#86cc5e"/>
<ellipse cx="45.6" cy="5" rx="2.9" ry="4.2" fill="#e23a1c"/>
<ellipse cx="1.4" cy="13.4" rx="3" ry="3.6" fill="#2a9ad8"/>
<ellipse cx="6.7" cy="14.4" rx="3.2" ry="4.5" fill="#f8c81c"/>
<ellipse cx="43.6" cy="11.4" rx="3.8" ry="3.9" fill="#86cc5e"/>
<ellipse cx="47.8" cy="19.2" rx="1.6" ry="2.6" fill="#2a8ad8"/>
<path d="M0 18l2.500-2.500 3 8.500-5.500 1.500z" fill="#38a6dc"/>
<path d="M7.500 3.500Q24 12 42 2" stroke="#d8d0c0" stroke-width=".4" fill="none"/>
</g>
<g filter="url(#t7c)">
<path d="M8.15 3.60h3.9v5.6l-1.95-1.3-1.95 1.3z" fill="#e8405a"/><rect x="9.30" y="4.70" width="1.6" height="2.6" rx=".4" fill="#fff" fill-opacity=".7"/>
<path d="M13.15 5.20h3.9v5.6l-1.95-1.3-1.95 1.3z" fill="#f8c020"/><rect x="14.30" y="6.30" width="1.6" height="2.6" rx=".4" fill="#fff" fill-opacity=".7"/>
<path d="M17.85 6.10h3.9v5.6l-1.95-1.3-1.95 1.3z" fill="#2aa87a"/><rect x="19.00" y="7.20" width="1.6" height="2.6" rx=".4" fill="#fff" fill-opacity=".7"/>
<path d="M22.85 6.45h3.9v5.6l-1.95-1.3-1.95 1.3z" fill="#5a62c8"/><rect x="24.00" y="7.55" width="1.6" height="2.6" rx=".4" fill="#fff" fill-opacity=".7"/>
<path d="M28.15 5.80h3.9v5.6l-1.95-1.3-1.95 1.3z" fill="#f8902a"/><rect x="29.30" y="6.90" width="1.6" height="2.6" rx=".4" fill="#fff" fill-opacity=".7"/>
<path d="M33.15 4.30h3.9v5.6l-1.95-1.3-1.95 1.3z" fill="#1aa890"/><rect x="34.30" y="5.40" width="1.6" height="2.6" rx=".4" fill="#fff" fill-opacity=".7"/>
<path d="M37.85 2.40h3.9v5.6l-1.95-1.3-1.95 1.3z" fill="#2a8ad8"/><rect x="39.00" y="3.50" width="1.6" height="2.6" rx=".4" fill="#fff" fill-opacity=".7"/>
<path d="M11.15 12.40h3.5v5l-1.75-1.3-1.75 1.3z" fill="#3a8ad8"/><rect x="12.10" y="13.20" width="1.6" height="2.6" rx=".4" fill="#fff" fill-opacity=".7"/>
<path d="M14.95 13.90h3.5v5l-1.75-1.3-1.75 1.3z" fill="#9a5ac8"/><rect x="15.90" y="14.70" width="1.6" height="2.6" rx=".4" fill="#fff" fill-opacity=".7"/>
<path d="M18.35 14.90h3.5v5l-1.75-1.3-1.75 1.3z" fill="#f89a2a"/><rect x="19.30" y="15.70" width="1.6" height="2.6" rx=".4" fill="#fff" fill-opacity=".7"/>
<path d="M22.15 15.20h3.5v5l-1.75-1.3-1.75 1.3z" fill="#5ac85a"/><rect x="23.10" y="16.00" width="1.6" height="2.6" rx=".4" fill="#fff" fill-opacity=".7"/>
<path d="M25.85 15.20h3.5v5l-1.75-1.3-1.75 1.3z" fill="#2a9ad8"/><rect x="26.80" y="16.00" width="1.6" height="2.6" rx=".4" fill="#fff" fill-opacity=".7"/>
<path d="M31.50 13.60h3.5v5l-1.75-1.3-1.75 1.3z" fill="#f8c81c"/><rect x="32.45" y="14.40" width="1.6" height="2.6" rx=".4" fill="#fff" fill-opacity=".7"/>
<path d="M35.55 12.10h3.5v5l-1.75-1.3-1.75 1.3z" fill="#e8404a"/><rect x="36.50" y="12.90" width="1.6" height="2.6" rx=".4" fill="#fff" fill-opacity=".7"/>
</g>
<g filter="url(#t7b)">
<path d="M10.100 12.600l2.200 5.900-4.300.3z" fill="#f06aa0"/>
<path d="M24.200 17.200l2.100 4.800h-4.200z" fill="#f06aa0"/>
<path d="M32.600 17.800l2.300 5.100h-4.500z" fill="#f0628e"/>
<path d="M42.600 10.800l2.100 5.700h-4.300z" fill="#f58a2a"/>
<path d="M37.600 30c.5-3 3-4.500 6-4.500 2 0 3.500.5 4.400 1.500V41H38z" fill="#7d9db4"/>
<ellipse cx="42.300" cy="22.600" rx="3.900" ry="4.300" fill="#b67a52"/>
<path d="M38.400 21c.3-3 2-4.600 4.200-4.600 2.300 0 3.800 1.500 3.900 4.300-2.500-1.300-5.500-1.300-8.100.3z" fill="#2a2220"/>
<ellipse cx="41.500" cy="24.800" rx="1.300" ry=".8" fill="#6a2a20"/>
<path d="M8.300 32c.5-2.500 2.500-4 4.500-4s3.500 1.500 3.700 4l-.5 7H9z" fill="#efd24e"/>
<path d="M8.200 23c0-3 1.700-5 4-5s4 2 4 5l.6 6.500-2 .5-1-4h-3.500l-1.300 3.500-1.300-.5z" fill="#8a5a3a"/>
<ellipse cx="12" cy="23.800" rx="2.900" ry="3.300" fill="#f2c4a6"/>
<ellipse cx="12" cy="25.300" rx="1.100" ry=".6" fill="#b8483a"/>
<path d="M0 31c1-1.500 3-2 5-1.500 2.500.5 4 2 4.500 4.500L9 43H0z" fill="#e8503a"/>
<path d="M0 32.500h8.500M0 36h9M0 39.500h9" stroke="#2aa89a" stroke-width="1.100"/>
<path d="M0 34.200h9M0 37.800h9" stroke="#f8d04a" stroke-width=".9"/>
<ellipse cx="3.900" cy="25.700" rx="3.700" ry="4" fill="#f3c6a6"/>
<path d="M.2 24.500c.2-2.800 1.800-4.300 3.900-4.300 2.200 0 3.600 1.600 3.600 4-2.400-1.200-5-1-7.500.3z" fill="#d8aa62"/>
<ellipse cx="4.500" cy="27.500" rx="1.200" ry=".7" fill="#b04a3a"/>
<path d="M30 35c.5-2.500 2-3.500 3.500-3.500h2c1.500 0 2.500 1.500 2.800 3.500l-.3 6h-8z" fill="#d8322c"/>
<path d="M28.700 27.500c0-3 1.600-4.800 3.800-4.800s3.800 1.800 3.800 4.800l.5 5.500-1.800.5-.8-3.500h-3.400l-.8 3.500-1.800-.5z" fill="#a86c3e"/>
<ellipse cx="32.400" cy="28.300" rx="2.800" ry="3.300" fill="#f2c6a8"/>
<ellipse cx="32.400" cy="30" rx="1.100" ry=".6" fill="#b8483a"/>
<path d="M15.800 36c.5-3 2.500-5 5.500-5.500h5c3 .5 4 2.500 4 5.500l-.5 4H16z" fill="#2c4c8c"/>
<ellipse cx="23.900" cy="27" rx="3.700" ry="4.200" fill="#f2c8aa"/>
<path d="M20.100 26c.2-3 1.800-4.500 3.900-4.500s3.600 1.500 3.700 4.300c-2.400-1.400-5-1.300-7.600.2z" fill="#b47e4c"/>
<ellipse cx="23.900" cy="29.800" rx=".8" ry=".7" fill="#c87868"/>
<path d="M0 42.500l8-1.500h34l6 .500V48H0z" fill="#f8c41e"/>
<ellipse cx="24.800" cy="44.300" rx="6.800" ry="1.500" fill="#f4f4f0"/>
<path d="M19.300 39h10.800v5c-2 1.200-8.800 1.200-10.800 0z" fill="#9cd8dc"/>
<ellipse cx="24.700" cy="39" rx="5.400" ry="1.200" fill="#b4e6e8"/>
<path d="M22.500 38.500v-4M24 38.500v-4.500M25.500 38.500v-4M27 38.500v-3.500" stroke="#e8a0b8" stroke-width=".5"/>
<path d="M9.300 38.500h3.600l-.4 4.500h-2.800z" fill="#2a8ac8"/>
<path d="M3.600 41h3.800l-.4 4.500H4z" fill="#ea6e5c"/>
<path d="M42 37.200h3.800l-.4 4.500h-3z" fill="#ea7a5c"/>
<path d="M7 44h9l-1 3.500c-2 .8-5 .8-7 0z" fill="#ea5a1c"/>
<ellipse cx="11.500" cy="44" rx="4.500" ry="1.100" fill="#f8a02a"/>
<ellipse cx="40.500" cy="44.200" rx="6.500" ry="2.200" fill="#3a9a4c"/>
<ellipse cx="40.200" cy="43.300" rx="4.300" ry="1.500" fill="#f8b820"/>
</g>
</svg></div><span class="t title" style="letter-spacing:-0.14px">Tasty Movie</span><span class="t artist" style="letter-spacing:-0.09px">Everydo Proch</span></div></td>
    <td><div class="cell"><span class="t dark" style="letter-spacing:0.6px">01 Apr 2024</span></div></td>
    <td><div class="cell"><span class="t" style="letter-spacing:0.97px">678</span></div></td>
    <td><div class="cell"><span class="t" style="letter-spacing:0.97px;left:-.7px">890</span></div></td>
    <td><div class="cell"><span class="t" style="letter-spacing:0.97px;left:-.7px">487</span></div></td>
    <td><div class="cell"><span class="t" style="letter-spacing:0.97px;left:-.7px">315</span></div></td>
    <td><div class="cell"><span class="t dark" style="letter-spacing:0.1px">1.80K</span></div></td>
    <td><div class="cell" style="height:0"><svg class="kebab" viewBox="0 0 24 24"><path d="M12 8c1.100 0 2-.9 2-2s-.9-2-2-2-2 .9-2 2 .9 2 2 2zm0 2c-1.100 0-2 .9-2 2s.9 2 2 2 2-.9 2-2-.9-2-2-2zm0 6c-1.100 0-2 .9-2 2s.9 2 2 2 2-.9 2-2-.9-2-2-2z"/></svg></div></td>
   </tr>
  </tbody>
 </table>
 <div class="footer">
  <span class="t" style="letter-spacing:0.05px;left:38px">Rows per page</span>
  <div class="rpp"><span class="t">7</span><svg viewBox="0 0 24 24"><path d="M16.59 8.59L12 13.17 7.41 8.590 6 10l6 6 6-6z"/></svg></div>
  <span class="t" style="letter-spacing:0.37px;left:238px">1-7 of 21 rows</span>
  <div class="pg on" style="left:1120px">1</div>
  <div class="pg" style="left:1150px">2</div>
  <div class="pg" style="left:1180px">3</div>
  <div class="pg" style="left:1216px;width:32px"><svg viewBox="0 0 24 24"><path d="M10 6L8.590 7.410 13.170 12l-4.580 4.590L10 18l6-6z"/></svg></div>
 </div>
</main>
</div>
</body>
</html>
